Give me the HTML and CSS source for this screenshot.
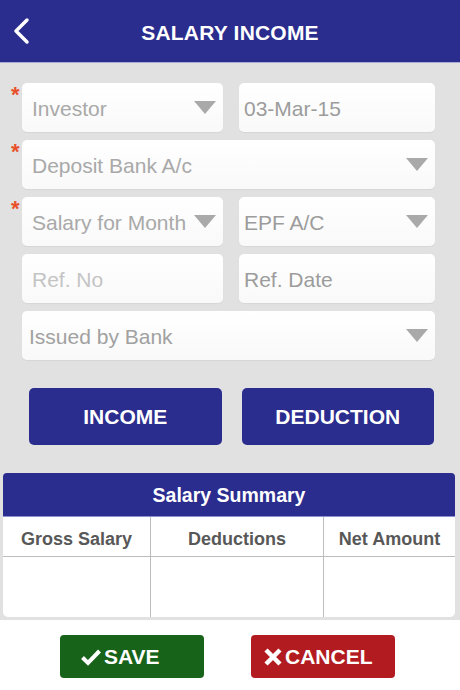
FILE: index.html
```html
<!DOCTYPE html>
<html lang="en">
<head>
    <meta charset="UTF-8">
    <meta name="viewport" content="width=device-width, initial-scale=1.0">
    <title>Salary Income</title>
    <link rel="stylesheet" href="styles.css">
</head>
<body>
    <div class="topbar">
        <svg class="back" width="18" height="28" viewBox="0 0 18 28">
            <path d="M15 3 L4 14 L15 25" fill="none" stroke="#fff" stroke-width="3.5" stroke-linecap="round" stroke-linejoin="round"/>
        </svg>
        <h1>SALARY INCOME</h1>
    </div>

    <div class="form">
        <div class="row">
            <div class="field select req"><span>Investor</span><i class="caret"></i></div>
            <div class="field right"><span>03-Mar-15</span></div>
        </div>
        <div class="row">
            <div class="field select req wide"><span>Deposit Bank A/c</span><i class="caret"></i></div>
        </div>
        <div class="row">
            <div class="field select req"><span>Salary for Month</span><i class="caret"></i></div>
            <div class="field select right"><span>EPF A/C</span><i class="caret"></i></div>
        </div>
        <div class="row">
            <div class="field placeholder"><span>Ref. No</span></div>
            <div class="field right"><span>Ref. Date</span></div>
        </div>
        <div class="row">
            <div class="field select wide issued"><span>Issued by Bank</span><i class="caret"></i></div>
        </div>
    </div>

    <div class="actions">
        <button class="btn">INCOME</button>
        <button class="btn">DEDUCTION</button>
    </div>

    <div class="summary">
        <div class="summary-head">Salary Summary</div>
        <div class="summary-cols">
            <div class="c1">Gross Salary</div>
            <div class="c2">Deductions</div>
            <div class="c3">Net Amount</div>
        </div>
        <div class="summary-vals">
            <div class="c1"></div>
            <div class="c2"></div>
            <div class="c3"></div>
        </div>
    </div>

    <div class="footer">
        <button class="fbtn save">
            <svg width="22" height="18" viewBox="0 0 22 18"><path d="M2.5 9.5 L8 15 L19.5 3" fill="none" stroke="#fff" stroke-width="4"/></svg>
            SAVE
        </button>
        <button class="fbtn cancel">
            <svg width="20" height="20" viewBox="0 0 20 20"><path d="M3 3 L17 17 M17 3 L3 17" fill="none" stroke="#fff" stroke-width="4.5"/></svg>
            CANCEL
        </button>
    </div>
</body>
</html>
```

FILE: styles.css
```css
*{
    margin: 0;
    padding: 0;
    box-sizing: border-box;
}

body{
    width: 460px;
    height: 690px;
    background: #fff;
    font-family: "Liberation Sans", Arial, sans-serif;
    overflow: hidden;
}

.topbar{
    height: 63px;
    background: #2a2c8e;
    position: relative;
    display: flex;
    align-items: center;
    justify-content: center;
    border-bottom: 1px solid #a9abd6;
}

.topbar .back{
    position: absolute;
    left: 12px;
    top: 17px;
}

.topbar h1{
    color: #fff;
    font-size: 21px;
    font-weight: bold;
    letter-spacing: 0.2px;
    margin-top: 3px;
}

.form{
    background: #e1e1e1;
    padding: 20px 25px 0 22px;
    display: flex;
    flex-direction: column;
    gap: 8px;
}

.row{
    display: flex;
    gap: 16px;
}

.field{
    position: relative;
    flex: 1;
    height: 49px;
    background: linear-gradient(#fff, #f9f9f9);
    border-radius: 5px;
    box-shadow: 0 1px 1px rgba(0,0,0,0.05);
    display: flex;
    align-items: center;
    padding-left: 10px;
    font-size: 21px;
    color: #a9a9a9;
}

.field span{
    margin-top: 2px;
}

.field.right{
    padding-left: 5px;
    color: #9c9c9c;
}

.field.placeholder{
    color: #c4c4c4;
}

.field.issued{
    padding-left: 7px;
    color: #a1a1a1;
}

.field.req::before{
    content: "*";
    position: absolute;
    left: -11px;
    top: -1px;
    color: #e8502c;
    font-size: 22px;
    font-weight: bold;
}

.caret{
    position: absolute;
    right: 7px;
    top: 18px;
    width: 0;
    height: 0;
    border-left: 11px solid transparent;
    border-right: 11px solid transparent;
    border-top: 13px solid #a9a9a9;
}

.actions{
    background: #e1e1e1;
    display: flex;
    gap: 20px;
    padding: 28px 26px 28px 29px;
}

.btn{
    flex: 1;
    height: 57px;
    background: #2a2c8e;
    color: #fff;
    border: none;
    border-radius: 5px;
    font-family: inherit;
    font-size: 21px;
    font-weight: bold;
}

.summary{
    background: #e1e1e1;
    padding: 0 5px 3px 3px;
}

.summary-head{
    height: 44px;
    background: #2a2c8e;
    border-radius: 4px 4px 0 0;
    border-bottom: 1px solid #8d90d2;
    color: #fff;
    font-size: 19.5px;
    font-weight: bold;
    text-align: center;
    line-height: 44px;
}

.summary-cols,
.summary-vals{
    display: grid;
    grid-template-columns: 147px 174px 1fr;
    background: #fff;
}

.summary-cols{
    height: 40px;
    border-bottom: 1px solid #bdbdbd;
}

.summary-cols div{
    font-size: 18px;
    font-weight: bold;
    color: #585858;
    text-align: center;
    line-height: 44px;
}

.summary-vals{
    height: 60px;
    border-radius: 0 0 5px 5px;
}

.c2{
    border-left: 1px solid #bdbdbd;
    border-right: 1px solid #bdbdbd;
}

.footer{
    display: flex;
    gap: 47px;
    padding: 15px 0 0 60px;
}

.fbtn{
    width: 144px;
    height: 43px;
    border: none;
    border-radius: 4px;
    color: #fff;
    font-family: inherit;
    font-size: 21px;
    font-weight: bold;
    display: flex;
    align-items: center;
}

.fbtn svg{
    margin-right: 2px;
}

.save{
    background: #176319;
    padding-left: 20px;
}

.cancel{
    background: #b21c20;
    padding-left: 12px;
}
```
